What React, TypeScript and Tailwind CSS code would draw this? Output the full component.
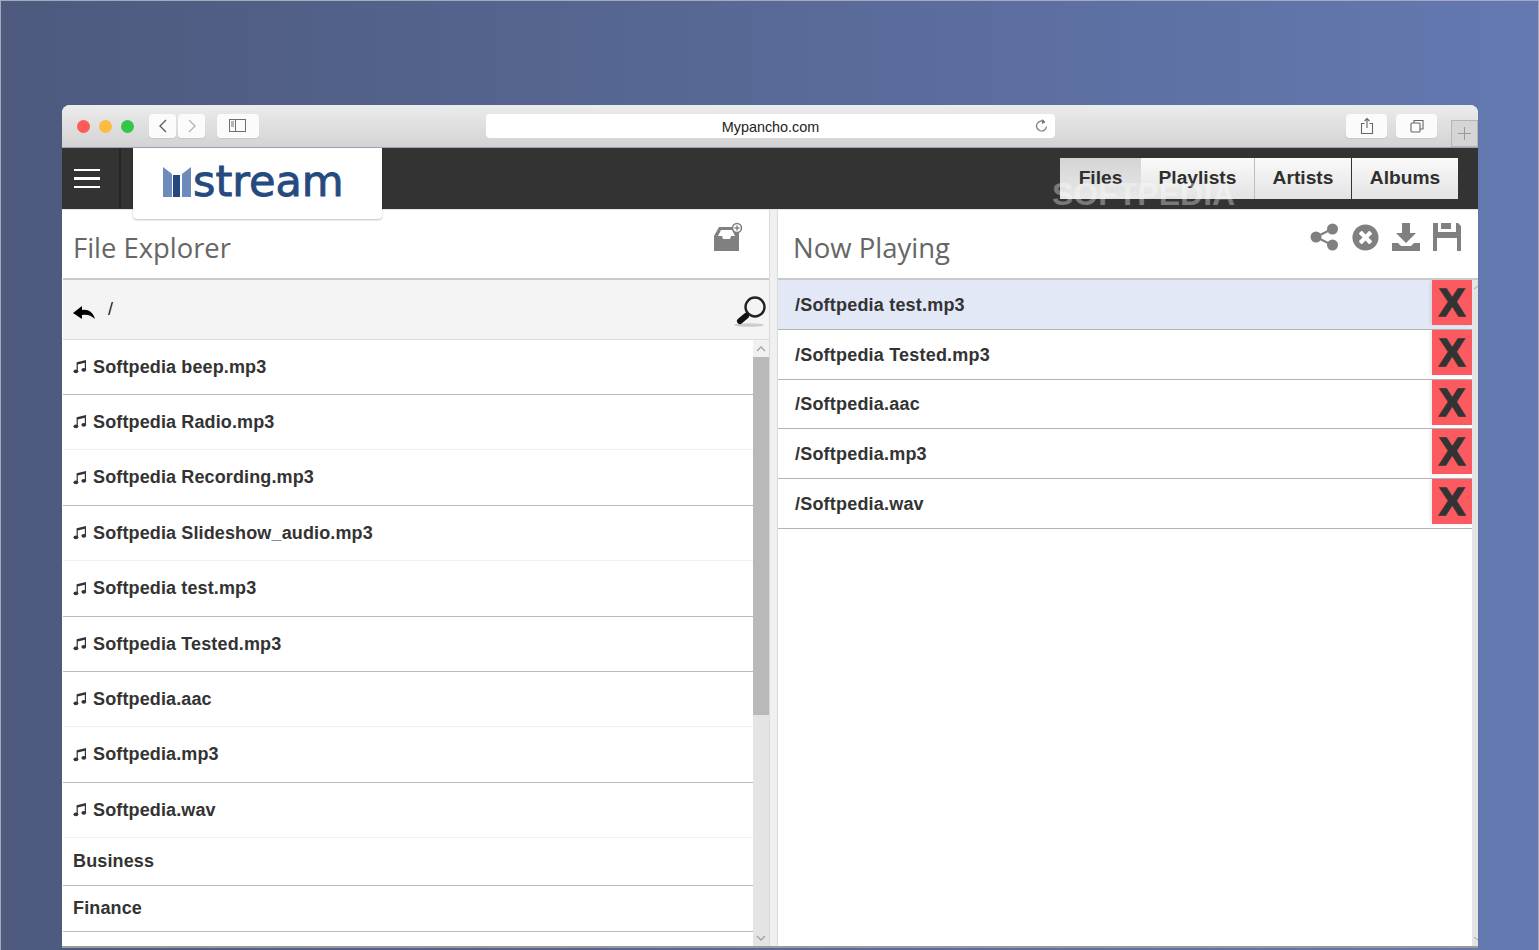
import React from "react";
import { FaTimesCircle } from "react-icons/fa";

const files = [
  { n: "Softpedia beep.mp3", b: "border-[#b9b9b9]", h: "h-[55px]" },
  { n: "Softpedia Radio.mp3", b: "border-[#efefef]", h: "h-[55px]" },
  { n: "Softpedia Recording.mp3", b: "border-[#b9b9b9]", h: "h-[56px]" },
  { n: "Softpedia Slideshow_audio.mp3", b: "border-[#efefef]", h: "h-[55px]" },
  { n: "Softpedia test.mp3", b: "border-[#b9b9b9]", h: "h-[56px]" },
  { n: "Softpedia Tested.mp3", b: "border-[#b9b9b9]", h: "h-[55px]" },
  { n: "Softpedia.aac", b: "border-[#efefef]", h: "h-[55px]" },
  { n: "Softpedia.mp3", b: "border-[#b9b9b9]", h: "h-[56px]" },
  { n: "Softpedia.wav", b: "border-[#efefef]", h: "h-[55px]" },
];
const playing = ["/Softpedia test.mp3", "/Softpedia Tested.mp3", "/Softpedia.aac", "/Softpedia.mp3", "/Softpedia.wav"];
const sans = "font-['Liberation_Sans',Arial,sans-serif]";

function Tool({ w, children, cls = "" }: { w: string; children: React.ReactNode; cls?: string }) {
  return <div className={`${w} h-6 rounded bg-[#fbfbfb] flex items-center justify-center shadow-[0_1px_1px_rgba(0,0,0,0.08)] ${cls}`}>{children}</div>;
}

function Tab({ label, w, cls = "" }: { label: string; w: string; cls?: string }) {
  return (
    <div className={`${w} h-[41px] flex items-center justify-center text-[19.2px] font-bold text-[#2f2f2f] bg-gradient-to-b ${cls}`}>{label}</div>
  );
}

function Note() {
  return (
    <svg width="14" height="15" viewBox="0 0 14 15" className="mr-[6px] shrink-0 -mt-[1px]" fill="#333">
      <path d="M3.6 3.2L13 1v2.6L4.8 5.5V12H3.6z" />
      <path d="M11.8 2h1.2v8.6h-1.2z" />
      <ellipse cx="2.9" cy="12.3" rx="2.4" ry="1.9" />
      <ellipse cx="10.8" cy="10.8" rx="2.4" ry="1.9" />
    </svg>
  );
}

export default function App() {
  return (
    <div className={`w-[1539px] h-[950px] overflow-hidden bg-gradient-to-r from-[#4d5a7e] to-[#6479b1] border-t border-x border-[#a4a9bb] pt-[104px] pl-[61px] pr-[60px] ${sans}`}>
      <div className="h-[843px] rounded-t-lg overflow-hidden flex flex-col bg-white border-b-2 border-[#9b9b9b] relative">
        {/* browser toolbar */}
        <div className="h-[43px] shrink-0 bg-gradient-to-b from-[#ececec] to-[#d3d3d3] border-b border-[#9da3b5] flex items-center pl-[15px] relative">
          <div className="flex gap-[9px]">
            <span className="w-[13px] h-[13px] rounded-full bg-[#fc5b57]" />
            <span className="w-[13px] h-[13px] rounded-full bg-[#fdbc40]" />
            <span className="w-[13px] h-[13px] rounded-full bg-[#33c748]" />
          </div>
          <div className="flex gap-[2px] ml-[15px] mb-[1px]">
            <Tool w="w-[27px]">
              <svg width="10" height="14" viewBox="0 0 10 14" fill="none" stroke="#5f5f5f" strokeWidth="1.4"><path d="M8 1L2 7l6 6" /></svg>
            </Tool>
            <Tool w="w-[27px]">
              <svg width="10" height="14" viewBox="0 0 10 14" fill="none" stroke="#b5b5b5" strokeWidth="1.4"><path d="M2 1l6 6-6 6" /></svg>
            </Tool>
          </div>
          <Tool w="w-[42px]" cls="ml-[12px] mb-[1px]">
            <svg width="18" height="13" viewBox="0 0 18 13" fill="none" stroke="#6f6f6f"><rect x="0.5" y="0.5" width="16" height="12" /><path d="M6.5 0.5v12M2 3h3M2 5h3M2 7h3" /></svg>
          </Tool>
          <div className="ml-[227px] mb-[1px] w-[569px] h-6 rounded bg-white flex items-center justify-center relative text-[14.4px] text-[#222] pt-[4px]">
            Mypancho.com
            <svg className="absolute right-[6px] top-[4px]" width="15" height="16" viewBox="0 0 15 16" fill="none" stroke="#777" strokeWidth="1.2"><path d="M10.8 4.2A5 5 0 1 0 12.5 8.5" /><path d="M8 1l3.4 3L8 6.2z" fill="#777" stroke="none" /></svg>
          </div>
          <Tool w="w-[41px]" cls="ml-[291px] mb-[1px]">
            <svg width="14" height="18" viewBox="0 0 14 18" fill="none" stroke="#666" strokeWidth="1.1"><path d="M4.5 6.5H1.5v10h11v-10H9.5M7 11V1.5M4.5 4L7 1.5 9.5 4" /></svg>
          </Tool>
          <Tool w="w-[41px]" cls="ml-[9px] mb-[1px]">
            <svg width="14" height="14" viewBox="0 0 14 14" fill="none" stroke="#666" strokeWidth="1.1"><rect x="1" y="4" width="9" height="9" rx="1" /><path d="M4 4V1.5h9V10h-3" /></svg>
          </Tool>
          <div className="ml-[14px] self-end w-[27px] h-[27px] border border-[#b5b5b5] bg-[#d5d5d5] flex items-center justify-center">
            <svg width="13" height="13" viewBox="0 0 13 13" stroke="#9a9a9a"><path d="M6.5 0v13M0 6.5h13" /></svg>
          </div>
        </div>

        {/* app nav */}
        <div className="h-[61px] shrink-0 bg-[#333] flex items-center relative">
          <div className="w-[59px] h-full border-r-2 border-[#262626] flex flex-col items-center justify-center gap-[6px] pr-[7px]">
            <span className="w-[26px] h-[2.5px] bg-white" />
            <span className="w-[26px] h-[2.5px] bg-white" />
            <span className="w-[26px] h-[2.5px] bg-white" />
          </div>
          <div className="absolute left-[71px] top-0 w-[249px] h-[71px] bg-white rounded-b shadow-[0_1px_2px_rgba(0,0,0,0.25)] flex items-center pl-[30px] pb-[4px] z-10">
            <svg width="28" height="32" viewBox="0 0 28 32" className="shrink-0">
              <path d="M0 1l9 7v23H0z" fill="#6d8cbb" />
              <path d="M28 1l-9 7v23h9z" fill="#6d8cbb" />
              <rect x="10" y="9" width="7" height="22" fill="#22487f" />
            </svg>
            <span className="font-['DejaVu_Sans',sans-serif] font-normal text-[43px] leading-none text-[#254a80] [-webkit-text-stroke:0.9px_#254a80] ml-[2px] mt-[0px]">stream</span>
          </div>
          <div className="ml-auto mr-[20px] flex items-center">
            <Tab label="Files" w="w-[81px]" cls="from-[#d4d4d4] to-[#e9e9e9]" />
            <Tab label="Playlists" w="w-[114px]" cls="from-[#fafafa] to-[#e3e3e3] border-r border-[#bdbdbd]" />
            <Tab label="Artists" w="w-[97px]" cls="from-[#fafafa] to-[#e3e3e3] border-r border-[#333]" />
            <Tab label="Albums" w="w-[106px]" cls="from-[#fafafa] to-[#e3e3e3]" />
          </div>
          <span className="absolute left-[990px] top-[30px] text-[32px] leading-none font-bold text-white/35 pointer-events-none">SOFTPEDIA</span>
        </div>

        {/* panels */}
        <div className="flex-1 min-h-0 flex border-t border-[#e5e5e5]">
          {/* left */}
          <div className="w-[707px] shrink-0 flex flex-col pl-px overflow-hidden">
            <div className="h-[70px] shrink-0 border-b-2 border-[#c9c9c9] flex px-[10px] relative">
              <h2 className="font-['Open_Sans',sans-serif] text-[27.4px] leading-none text-[#666] mt-[24px]">File Explorer</h2>
              <svg className="absolute right-[26px] top-[12px]" width="29" height="30" viewBox="0 0 29 30">
                <path fillRule="evenodd" d="M5 5h14l6 5v19H0V14zM7 8h11l3 6h-4l-1 3H9l-1-3H4z" fill="#808080" />
                <circle cx="23" cy="6" r="4.5" fill="#fff" stroke="#808080" strokeWidth="1.6" />
                <path d="M23 3.5v5M20.5 6h5" stroke="#808080" strokeWidth="1.4" />
              </svg>
            </div>
            <div className="h-[60px] shrink-0 bg-[#f4f4f4] border-b border-[#dcdcdc] flex items-center px-[10px] relative">
              <svg width="22" height="15" viewBox="0 0 22 15" className="mt-[5px] shrink-0" fill="#000">
                <path d="M0 8L9 1v4C15 4 20 7 22 14 18 10 14 9 9 10v4z" />
              </svg>
              <span className="ml-[13px] text-[18px] text-[#222]">/</span>
              <svg className="absolute right-[2px] top-[13px]" width="34" height="36" viewBox="0 0 34 36" fill="none">
                <ellipse cx="16" cy="32" rx="15" ry="1.8" fill="#000" opacity="0.16" />
                <circle cx="22" cy="14" r="9.5" stroke="#222" strokeWidth="2.4" />
                <path d="M7 28l6-5" stroke="#111" strokeWidth="6" strokeLinecap="round" />
              </svg>
            </div>
            <div className="flex-1 min-h-0 flex">
              <div className="flex-1 min-w-0">
                {files.map((f) => (
                  <div key={f.n} className={`${f.h} ${f.b} border-b flex items-center px-[10px] text-[18px] tracking-[0.13px] font-bold text-[#333]`}>
                    <Note />
                    {f.n}
                  </div>
                ))}
                <div className="h-[48px] border-b border-[#b9b9b9] flex items-center px-[10px] pb-[1px] text-[18px] tracking-[0.13px] font-bold text-[#333]">Business</div>
                <div className="h-[46px] border-b border-[#b9b9b9] flex items-center px-[10px] pb-[1px] text-[18px] tracking-[0.13px] font-bold text-[#333]">Finance</div>
              </div>
              <div className="w-[16px] shrink-0 bg-[#e4e4e4] flex flex-col">
                <div className="h-[17px] shrink-0 bg-[#f1f1f1] flex items-center justify-center">
                  <svg width="10" height="6" viewBox="0 0 10 6" fill="none" stroke="#a3a3a3" strokeWidth="1.3"><path d="M1 5l4-4 4 4" /></svg>
                </div>
                <div className="h-[358px] shrink-0 bg-[#b9b9b9]" />
                <div className="flex-1" />
                <div className="h-[17px] shrink-0 flex items-center justify-center">
                  <svg width="10" height="6" viewBox="0 0 10 6" fill="none" stroke="#a3a3a3" strokeWidth="1.3"><path d="M1 1l4 4 4-4" /></svg>
                </div>
              </div>
            </div>
          </div>

          {/* splitter */}
          <div className="w-[9px] shrink-0 bg-[#f0f0f0] border-x border-[#dadada]" />

          {/* right */}
          <div className="flex-1 min-w-0 flex flex-col">
            <div className="h-[70px] shrink-0 border-b-2 border-[#c9c9c9] flex px-[15px] relative">
              <h2 className="font-['Open_Sans',sans-serif] text-[27.5px] leading-none text-[#666] mt-[24px]">Now Playing</h2>
              <div className="absolute right-[17px] top-[13px] flex items-center gap-[13px] text-[#808080]">
                <svg width="29" height="28" viewBox="0 0 29 28" fill="#808080" stroke="#808080">
                  <circle cx="6" cy="14" r="5.5" stroke="none" />
                  <circle cx="22.5" cy="6" r="5.5" stroke="none" />
                  <circle cx="22.5" cy="22" r="5.5" stroke="none" />
                  <path d="M6 14L22 6M6 14l16 8" strokeWidth="2" />
                </svg>
                <FaTimesCircle className="text-[27px]" />
                <svg width="28" height="28" viewBox="0 0 28 28" fill="#808080"><path d="M10 0h8v10h6L14 20 4 10h6z" /><path d="M0 20h6l3 3h10l3-3h6v8H0z" /></svg>
                <svg width="28" height="28" viewBox="0 0 28 28" fill="#808080"><path fillRule="evenodd" d="M0 0h5v9h18V0h2l3 3v25h-4V15H4v13H0z" /><path d="M8 0h10v6H8z" /></svg>
              </div>
            </div>
            <div className="flex-1 min-h-0 flex">
              <div className="flex-1 min-w-0">
                {playing.map((p, i) => (
                  <div key={p} className={`h-[49.8px] border-b border-[#b4b4b4] flex items-center pl-[17px] text-[18px] tracking-[0.2px] font-bold text-[#333] ${i === 0 ? "bg-[#e3e8f6]" : "bg-white"}`}>
                    <span className="flex-1 pt-[2px]">{p}</span>
                    <span className="w-[40px] h-[45px] self-start bg-[#fb5a60] flex items-center justify-center shadow-[-2px_0_3px_rgba(0,0,0,0.08)]">
                      <span className="font-bold text-[39px] leading-none text-[#333] [-webkit-text-stroke:1.6px_#333]">X</span>
                    </span>
                  </div>
                ))}
              </div>
              <div className="w-[6px] shrink-0 bg-[#e4e4e4] flex flex-col justify-between items-end py-[5px] overflow-hidden">
                <svg width="4" height="5" viewBox="0 0 4 5" fill="none" stroke="#a3a3a3" strokeWidth="1"><path d="M0 4l4-3" /></svg>
                <svg width="4" height="5" viewBox="0 0 4 5" fill="none" stroke="#a3a3a3" strokeWidth="1"><path d="M0 1l4 3" /></svg>
              </div>
            </div>
          </div>
        </div>
      </div>
    </div>
  );
}
